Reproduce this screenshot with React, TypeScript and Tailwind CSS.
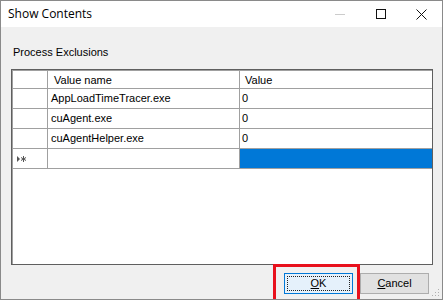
import React from 'react';

const rows = [
    { name: 'AppLoadTimeTracer.exe', value: '0' },
    { name: 'cuAgent.exe', value: '0' },
    { name: 'cuAgentHelper.exe', value: '0' },
];

export default function App() {
    return (
        <div
            className="w-[443px] h-[300px] bg-[#f0f0f0] border border-[#8a8a8a] flex flex-col relative overflow-hidden text-black"
            style={{ fontFamily: '"Liberation Sans", Arial, sans-serif' }}
        >
            {/* title bar */}
            <div className="h-[26px] bg-white flex items-center pl-[7px] shrink-0">
                <span className="text-[12px] flex-1" style={{ fontFamily: '"Open Sans", "Noto Sans", sans-serif' }}>Show Contents</span>
                <div className="flex items-center h-full">
                    <div className="w-[40px] h-full flex items-center justify-center">
                        <div className="w-[10px] h-px bg-[#cccccc]" />
                    </div>
                    <div className="w-[41px] h-full flex items-center justify-center">
                        <div className="w-[10px] h-[10px] border border-[#111]" />
                    </div>
                    <div className="w-[41px] h-full flex items-center justify-center">
                        <svg width="11" height="11" viewBox="0 0 11 11">
                            <path d="M0.5 0.5 L10.5 10.5 M10.5 0.5 L0.5 10.5" stroke="#111" strokeWidth="1" />
                        </svg>
                    </div>
                </div>
            </div>

            <div className="flex-1 flex flex-col pl-[10px] pr-[9px]">
                <div className="pt-[18px] h-[42px] text-[11px] leading-[14px] pl-[2px]">Process Exclusions</div>

                {/* data grid */}
                <div className="h-[196px] bg-white border border-[#5f5f5f] shadow-[inset_1px_1px_0_#a0a0a0] flex flex-col text-[11px]">
                    <div className="flex h-[19px] border-b border-[#a0a0a0]">
                        <div className="w-[36px] border-r border-[#a0a0a0]" />
                        <div className="w-[192px] border-r border-[#a0a0a0] pl-[6px] leading-[18px] pt-[1px]">Value name</div>
                        <div className="flex-1 pl-[5px] leading-[18px] pt-[1px]">Value</div>
                    </div>
                    {rows.map((r) => (
                        <div key={r.name} className="flex h-[20px] border-b border-[#a0a0a0]">
                            <div className="w-[36px] border-r border-[#a0a0a0]" />
                            <div className="w-[192px] border-r border-[#a0a0a0] pl-[3px] leading-[19px]">{r.name}</div>
                            <div className="flex-1 pl-[2px] leading-[19px]">{r.value}</div>
                        </div>
                    ))}
                    <div className="flex h-[20px] border-b border-[#a0a0a0]">
                        <div className="w-[36px] border-r border-[#a0a0a0] flex items-center pl-[5px]">
                            <svg width="10" height="8" viewBox="0 0 10 8">
                                <path d="M0 1 L0 7 L3 4 Z" fill="#555" />
                                <path d="M6.5 1 L6.5 7 M4 2.5 L9 5.5 M9 2.5 L4 5.5" stroke="#555" strokeWidth="1" />
                            </svg>
                        </div>
                        <div className="w-[192px] border-r border-[#a0a0a0]" />
                        <div className="flex-1 bg-[#0078d7]" />
                    </div>
                </div>

                {/* buttons */}
                <div className="flex justify-end gap-[7px] pt-[8px] pr-[4px]">
                    <button className="w-[69px] h-[21px] bg-[#e5f1fb] border border-[#0078d7] p-[2px]">
                        <div className="w-full h-full border border-dotted border-[#222] flex items-center justify-center text-[11px] leading-none">
                            <span><span className="underline">O</span>K</span>
                        </div>
                    </button>
                    <button className="w-[69px] h-[21px] bg-[#e1e1e1] border border-[#adadad] flex items-center justify-center text-[11px] leading-none">
                        <span><span className="underline">C</span>ancel</span>
                    </button>
                </div>
            </div>

            {/* annotation box */}
            <div className="absolute left-[272px] top-[263px] w-[87px] h-[40px] border-[3px] border-[#e8101c]" />

            {/* resize grip */}
            <svg className="absolute right-[2px] bottom-[2px]" width="8" height="8" viewBox="0 0 8 8">
                <rect x="6" y="0" width="1" height="1" fill="#b0b0b0" />
                <rect x="3" y="3" width="1" height="1" fill="#b0b0b0" />
                <rect x="6" y="3" width="1" height="1" fill="#b0b0b0" />
                <rect x="0" y="6" width="1" height="1" fill="#b0b0b0" />
                <rect x="3" y="6" width="1" height="1" fill="#b0b0b0" />
                <rect x="6" y="6" width="1" height="1" fill="#b0b0b0" />
            </svg>
        </div>
    );
}
